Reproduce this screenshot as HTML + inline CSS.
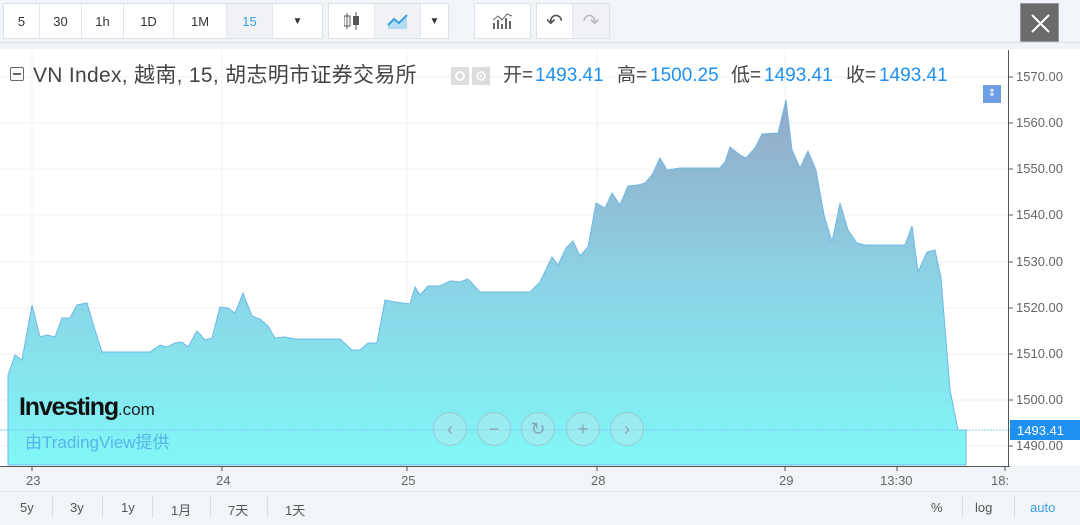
<!DOCTYPE html>
<html><head><meta charset="utf-8"><style>
*{margin:0;padding:0;box-sizing:border-box}
body{width:1080px;height:525px;overflow:hidden;background:#f1f4f8;font-family:"Liberation Sans","Noto Sans CJK SC",sans-serif;position:relative}
.tb{position:absolute;top:3px;height:36px;background:#fff;border:1px solid #dde2e8;display:flex}
.tb div{height:34px;border-right:1px solid #e3e7ec;display:flex;align-items:center;justify-content:center;font-size:13px;color:#333}
.tb div:last-child{border-right:none}
.ax{position:absolute;left:1016px;font-size:13px;color:#666}
.xl{position:absolute;top:473px;font-size:13px;color:#666}
.bt{position:absolute;top:500px;font-size:13px;color:#555}
.sep{position:absolute;top:496px;width:1px;height:22px;background:#ddd}
.nav{position:absolute;top:412px;width:34px;height:34px;border-radius:50%;border:1px solid rgba(150,170,180,.5);background:rgba(200,230,235,.35);color:rgba(130,150,160,.8);font-size:18px;display:flex;align-items:center;justify-content:center}
.t{position:absolute;top:64px;font-size:21px;line-height:24px;height:24px;color:#444;white-space:nowrap}
.s{font-size:19px}
.v{color:#1e90f0}
</style></head><body>
<div class="tb" style="left:3px;width:320px">
<div style="width:36px">5</div><div style="width:42px">30</div><div style="width:42px">1h</div><div style="width:50px">1D</div><div style="width:53px">1M</div><div style="width:46px;background:#f0f2f5;color:#3aa0e0">15</div><div style="width:49px;font-size:10px">▼</div></div>
<div class="tb" style="left:328px;width:121px">
<div style="width:46px"><svg width="16" height="20"><path d="M3 2v16M3 5h3v10H0V5zM12 1v18" stroke="#555" fill="none"/><rect x="9" y="5" width="6" height="9" fill="#555"/></svg></div>
<div style="width:46px;background:#f0f2f5"><svg width="22" height="16"><path d="M1 12L7 6L12 10L20 2V16H1Z" fill="#b3dcf3"/><path d="M1 12L7 6L12 10L20 2" stroke="#3aa0e0" stroke-width="2" fill="none"/></svg></div>
<div style="width:27px;font-size:10px">▼</div></div>
<div class="tb" style="left:474px;width:57px"><div style="width:55px"><svg width="22" height="18"><path d="M2 17V11M6 17V8M10 17V12M14 17V6M18 17V9" stroke="#666" stroke-width="2"/><path d="M1 8L6 4L10 8L15 2L20 4" stroke="#666" fill="none"/></svg></div></div>
<div class="tb" style="left:536px;width:74px"><div style="width:36px;font-size:20px;color:#555">↶</div><div style="width:36px;font-size:20px;color:#bbb;background:#f0f2f5">↷</div></div>
<div style="position:absolute;left:1020px;top:3px;width:39px;height:39px;background:#6b6b6b;border:1px solid #999"><svg width="39" height="39"><path d="M11 11L28 28M28 11L11 28" stroke="#fff" stroke-width="2"/></svg></div>
<div style="position:absolute;left:0;top:42px;width:1080px;height:8px;background:#f1f4f8;border-top:1px solid #dde2e8"></div>
<div style="position:absolute;left:0;top:49px;width:1013px;height:417px;background:#fff"></div>
<div style="position:absolute;left:1013px;top:49px;width:67px;height:417px;background:#fff"></div>
<svg style="position:absolute;left:0;top:0" width="1080" height="525">
<defs><linearGradient id="g" x1="0" y1="100" x2="0" y2="465" gradientUnits="userSpaceOnUse"><stop offset="0" stop-color="#94a8c6"/><stop offset="0.5" stop-color="#8bd3e6"/><stop offset="1" stop-color="#80f7f7"/></linearGradient></defs>
<g stroke="#f0f2f4"><path d="M0 77H1008M0 123H1008M0 169H1008M0 215H1008M0 262H1008M0 308H1008M0 354H1008M0 400H1008M0 446H1008"/><path d="M32 50V465M222 50V465M407 50V465M597 50V465M785 50V465"/></g>
<path d="M8 375L15 355L22 360L32 305L40 337L47 335L55 337L62 318L70 318L77 305L87 303L95 330L102 352L150 352L160 345L167 347L175 343L182 342L188 347L197 331L205 340L212 338L220 307L228 308L235 313L243 293L252 316L260 319L268 326L275 338L285 337L295 339L340 339L352 350L360 350L368 343L377 343L385 300L395 302L410 304L415 287L420 295L428 286L440 286L450 281L460 282L468 279L480 292L530 292L540 282L552 257L558 265L566 248L573 241L580 256L588 247L596 203L605 208L612 193L620 205L628 186L638 185L645 183L652 175L660 158L667 170L680 168L720 168L725 162L730 147L740 155L746 158L755 148L762 134L778 133L786 100L792 150L800 168L808 151L816 170L824 215L832 242L840 203L848 230L857 243L865 245L905 245L912 226L918 272L927 252L935 250L941 278L950 390L958 430L966 430L966 465L8 465Z" fill="url(#g)" stroke="#6fb8e6" stroke-width="1"/>
<path d="M0 430H1010" stroke="#7ec8f0" stroke-width="1" stroke-dasharray="2,1"/>
<path d="M1008.5 50V467M0 466.5H1010" stroke="#555"/>
<g stroke="#555"><path d="M1008 77h5M1008 123h5M1008 169h5M1008 215h5M1008 262h5M1008 308h5M1008 354h5M1008 400h5M1008 446h5"/><path d="M32 466v5M222 466v5M407 466v5M597 466v5M785 466v5M897 466v5M1005 466v5"/></g>
</svg>
<div class="ax" style="top:69px">1570.00</div><div class="ax" style="top:115px">1560.00</div><div class="ax" style="top:161px">1550.00</div><div class="ax" style="top:207px">1540.00</div><div class="ax" style="top:254px">1530.00</div><div class="ax" style="top:300px">1520.00</div><div class="ax" style="top:346px">1510.00</div><div class="ax" style="top:392px">1500.00</div><div class="ax" style="top:438px">1490.00</div>
<div style="position:absolute;left:1010px;top:420px;width:70px;height:20px;background:#1e90f0;color:#fff;font-size:13px;padding:3px 0 0 7px">1493.41</div>
<div class="xl" style="left:26px">23</div><div class="xl" style="left:216px">24</div><div class="xl" style="left:401px">25</div><div class="xl" style="left:591px">28</div><div class="xl" style="left:779px">29</div><div class="xl" style="left:880px">13:30</div><div class="xl" style="left:991px">18:</div>
<div style="position:absolute;left:0;top:491px;width:1080px;height:34px;background:#f1f4f8;border-top:1px solid #e3e7ec"></div>
<div class="bt" style="left:20px">5y</div><div class="sep" style="left:52px"></div><div class="bt" style="left:70px">3y</div><div class="sep" style="left:102px"></div><div class="bt" style="left:121px">1y</div><div class="sep" style="left:152px"></div><div class="bt" style="left:171px">1月</div><div class="sep" style="left:210px"></div><div class="bt" style="left:228px">7天</div><div class="sep" style="left:267px"></div><div class="bt" style="left:285px">1天</div>
<div class="bt" style="left:931px">%</div><div class="sep" style="left:962px"></div><div class="bt" style="left:975px">log</div><div class="sep" style="left:1014px"></div><div class="bt" style="left:1030px;color:#3aa0e0">auto</div>
<span style="position:absolute;left:10px;top:67px;width:14px;height:14px;border:1.5px solid #666;border-radius:2px"><span style="position:absolute;left:2px;right:2px;top:5px;height:1.5px;background:#666"></span></span>
<div class="t" style="left:33px;letter-spacing:0.3px">VN Index, 越南, 15, 胡志明市证券交易所</div>
<span style="position:absolute;left:451px;top:67px;width:18px;height:18px;background:#ddd"><span style="position:absolute;left:4px;top:4px;width:10px;height:10px;border:2px solid #fff;border-radius:50%"></span></span>
<span style="position:absolute;left:472px;top:67px;width:18px;height:18px;background:#ddd;color:#fff;font-size:14px;text-align:center;line-height:18px">⚙</span>
<div class="t s" style="left:503px">开=</div><div class="t s v" style="left:535px">1493.41</div>
<div class="t s" style="left:617px">高=</div><div class="t s v" style="left:650px">1500.25</div>
<div class="t s" style="left:731px">低=</div><div class="t s v" style="left:764px">1493.41</div>
<div class="t s" style="left:846px">收=</div><div class="t s v" style="left:879px">1493.41</div>
<div style="position:absolute;left:983px;top:85px;width:18px;height:18px;background:#6f9ee6;color:#fff;font-size:10px;text-align:center;line-height:18px">⇕</div>
<div style="position:absolute;left:19px;top:393px;font-size:25px;font-weight:bold;color:#111;letter-spacing:-1.2px">Investing<span style="font-size:17px;font-weight:normal;letter-spacing:0;color:#222">.com</span></div>
<div style="position:absolute;left:25px;top:428px;font-size:17px;color:#5ab4e8">由TradingView提供</div>
<div class="nav" style="left:433px">‹</div><div class="nav" style="left:477px">−</div><div class="nav" style="left:521px">↻</div><div class="nav" style="left:566px">+</div><div class="nav" style="left:610px">›</div>
</body></html>
